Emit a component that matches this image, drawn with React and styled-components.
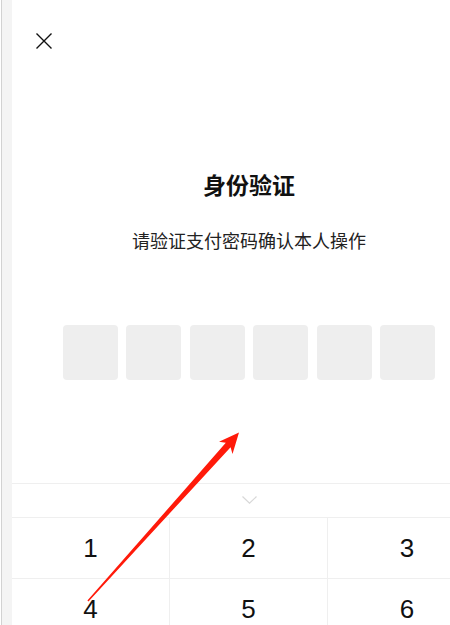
import React from 'react';
import styled, {createGlobalStyle} from 'styled-components';

const GlobalStyle = createGlobalStyle`
    html, body {
        margin: 0;
        padding: 0;
        background: #fff;
        overflow: hidden;
    }

    body {
        font-family: "Liberation Sans", "Noto Sans CJK SC", sans-serif;
    }
`;

const DIGITS = [['1', '2', '3'], ['4', '5', '6']];

const CloseIcon = () => (
    <svg width="16" height="16" viewBox="0 0 16 16">
        <path d="M0.5 0.5 L15.5 15.5 M15.5 0.5 L0.5 15.5" stroke="#111" strokeWidth="1.4" fill="none"/>
    </svg>
);

const ChevronIcon = () => (
    <svg width="15" height="8" viewBox="0 0 15 8">
        <path d="M0.5 0.5 L7.5 7.2 L14.5 0.5" stroke="#d8d8d8" strokeWidth="1.2" fill="none"/>
    </svg>
);

// the red annotation arrow drawn over the screenshot
const Arrow = () => (
    <ArrowLayer width="450" height="625" viewBox="0 0 450 625">
        <polygon
            fill="#ff1a0a"
            points="239,432.5 232.5,454 230.6,447.2 88.5,601.4 87.4,600.6 225.8,442.8 219,441.8"
        />
    </ArrowLayer>
);

export default function App() {

    return (
        <Page>
            <GlobalStyle/>

            <Strip/>

            <Main>
                <CloseButton>
                    <CloseIcon/>
                </CloseButton>

                <Title>身份验证</Title>
                <Subtitle>请验证支付密码确认本人操作</Subtitle>

                <CodeRow>
                    {[0, 1, 2, 3, 4, 5].map(i => <CodeBox key={i}/>)}
                </CodeRow>

                <Keyboard>
                    <Collapse>
                        <ChevronIcon/>
                    </Collapse>

                    {
                        DIGITS.map((row, r) => (
                            <KeyRow key={r}>
                                {row.map((d, c) => <Key key={d} $last={c === row.length - 1}>{d}</Key>)}
                            </KeyRow>
                        ))
                    }
                </Keyboard>
            </Main>

            <Arrow/>
        </Page>
    );

}

const Page = styled.div`
    position: relative;
    display: flex;
    width: 450px;
    height: 625px;
    overflow: hidden;
`;

const Strip = styled.div`
    flex-shrink: 0;
    width: 10px;
    margin-left: 1px;
    border-left: 1px solid #d2d2d2;
    background: #f4f4f4;
`;

const Main = styled.div`
    flex-shrink: 0;
    width: 474px;
    display: flex;
    flex-direction: column;
    align-items: center;
`;

const CloseButton = styled.div`
    align-self: flex-start;
    display: flex;
    width: 16px;
    height: 16px;
    margin: 33px 0 0 24px;
`;

const Title = styled.div`
    margin-top: 120px;
    font-family: "Noto Sans CJK SC", sans-serif;
    font-size: 23px;
    font-weight: 700;
    line-height: 30px;
    color: #111;
`;

const Subtitle = styled.div`
    margin-top: 29px;
    font-family: "Noto Sans CJK SC", sans-serif;
    font-size: 18px;
    line-height: 24px;
    color: #222;
`;

const CodeRow = styled.div`
    display: flex;
    gap: 8.6px;
    margin-top: 73px;
`;

const CodeBox = styled.div`
    width: 55px;
    height: 55px;
    border-radius: 4px;
    background: #eeeeee;
`;

const Keyboard = styled.div`
    align-self: stretch;
    margin-top: 103px;
    border-top: 1px solid #efefef;
`;

const Collapse = styled.div`
    display: flex;
    align-items: center;
    justify-content: center;
    height: 33px;
    padding-bottom: 2px;
    box-sizing: border-box;
`;

const KeyRow = styled.div`
    display: grid;
    grid-template-columns: repeat(3, 1fr);
    border-top: 1px solid #efefef;
`;

const Key = styled.div`
    display: flex;
    align-items: center;
    justify-content: center;
    height: 60px;
    border-right: ${p => p.$last ? 'none' : '1px solid #efefef'};
    font-size: 26px;
    color: #111;
`;

const ArrowLayer = styled.svg`
    position: absolute;
    left: 0;
    top: 0;
    pointer-events: none;
`;
